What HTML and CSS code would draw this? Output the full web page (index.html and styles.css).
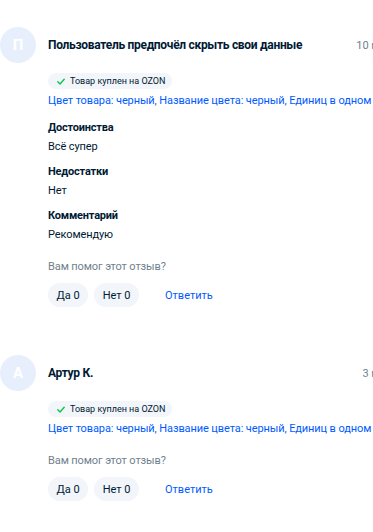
FILE: index.html
```html
<!DOCTYPE html>
<html lang="ru">
<head>
    <meta charset="UTF-8">
    <meta name="viewport" content="width=device-width, initial-scale=1.0">
    <title>Отзывы</title>
    <link rel="stylesheet" href="styles.css">
</head>
<body>
    <div class="reviews">
        <div class="review">
            <div class="review-head">
                <div class="avatar">П</div>
                <div class="name">Пользователь предпочёл скрыть свои данные</div>
                <div class="date">10 мая 2023</div>
            </div>
            <div class="review-body">
                <div class="badge">
                    <svg class="check" viewBox="0 0 10 8" width="8" height="7"><path d="M1 4.2 3.8 7 9 1.2" fill="none" stroke="#10c44c" stroke-width="1.8" stroke-linecap="round" stroke-linejoin="round"/></svg>
                    Товар куплен на OZON
                </div>
                <div class="variant">Цвет товара: черный, Название цвета: черный, Единиц в одном товаре: 1</div>

                <div class="section">
                    <div class="section-title">Достоинства</div>
                    <div class="section-text">Всё супер</div>
                </div>
                <div class="section">
                    <div class="section-title">Недостатки</div>
                    <div class="section-text">Нет</div>
                </div>
                <div class="section">
                    <div class="section-title">Комментарий</div>
                    <div class="section-text">Рекомендую</div>
                </div>

                <div class="helpful">Вам помог этот отзыв?</div>
                <div class="actions">
                    <button class="vote">Да 0</button>
                    <button class="vote">Нет 0</button>
                    <button class="reply">Ответить</button>
                </div>
            </div>
        </div>

        <div class="review">
            <div class="review-head">
                <div class="avatar">А</div>
                <div class="name">Артур К.</div>
                <div class="date">3 мая 2023</div>
            </div>
            <div class="review-body">
                <div class="badge">
                    <svg class="check" viewBox="0 0 10 8" width="8" height="7"><path d="M1 4.2 3.8 7 9 1.2" fill="none" stroke="#10c44c" stroke-width="1.8" stroke-linecap="round" stroke-linejoin="round"/></svg>
                    Товар куплен на OZON
                </div>
                <div class="variant">Цвет товара: черный, Название цвета: черный, Единиц в одном товаре: 1</div>

                <div class="helpful short">Вам помог этот отзыв?</div>
                <div class="actions">
                    <button class="vote">Да 0</button>
                    <button class="vote">Нет 0</button>
                    <button class="reply">Ответить</button>
                </div>
            </div>
        </div>
    </div>
</body>
</html>
```

FILE: styles.css
```css
body {
    margin: 0;
    background: #fff;
    color: #001a34;
    font-family: Roboto, Arial, sans-serif;
    overflow: hidden;
}
.reviews {
    width: 419px;
    padding-top: 27px;
}
.review {
    margin-bottom: 48px;
}
.review-head {
    display: flex;
    align-items: center;
    height: 36px;
}
.avatar {
    width: 36px;
    height: 36px;
    border-radius: 50%;
    background: #e8effc;
    color: #fff;
    font-weight: 700;
    font-size: 15px;
    display: flex;
    align-items: center;
    justify-content: center;
    flex-shrink: 0;
}
.name {
    margin-left: 12px;
    font-size: 12px;
    font-weight: 700;
    letter-spacing: -0.3px;
    flex: 1;
    white-space: nowrap;
}
.date {
    font-size: 11px;
    color: #707f8d;
    white-space: nowrap;
}
.review-body {
    padding-left: 48px;
    padding-top: 10px;
}
.badge {
    display: flex;
    width: fit-content;
    align-items: center;
    height: 16px;
    padding: 0 7px 0 9px;
    border-radius: 8px;
    background: #f2f5f9;
    font-size: 9px;
    line-height: 16px;
    color: #001a34;
    white-space: nowrap;
}
.check {
    margin-right: 5px;
}
.variant {
    margin-top: 4px;
    font-size: 11px;
    line-height: 16px;
    color: #005bff;
    white-space: nowrap;
    letter-spacing: -0.1px;
}
.section {
    margin-top: 10px;
}
.section + .section {
    margin-top: 6px;
}
.section-title {
    font-size: 11px;
    font-weight: 700;
    line-height: 18px;
    letter-spacing: -0.2px;
}
.section-text {
    font-size: 11px;
    line-height: 20px;
    letter-spacing: -0.1px;
}
.helpful {
    margin-top: 13px;
    font-size: 11px;
    line-height: 18px;
    color: #707f8d;
    letter-spacing: -0.1px;
}
.helpful.short {
    margin-top: 15px;
}
.actions {
    display: flex;
    align-items: center;
    margin-top: 7px;
}
.vote {
    height: 24px;
    padding: 0 8.5px;
    margin-right: 6px;
    border: none;
    border-radius: 12px;
    background: #f2f5f9;
    color: #001a34;
    font-family: inherit;
    font-size: 11px;
}
.reply {
    margin-left: 20px;
    padding: 0;
    border: none;
    background: none;
    color: #005bff;
    font-family: inherit;
    font-size: 11px;
}
```
